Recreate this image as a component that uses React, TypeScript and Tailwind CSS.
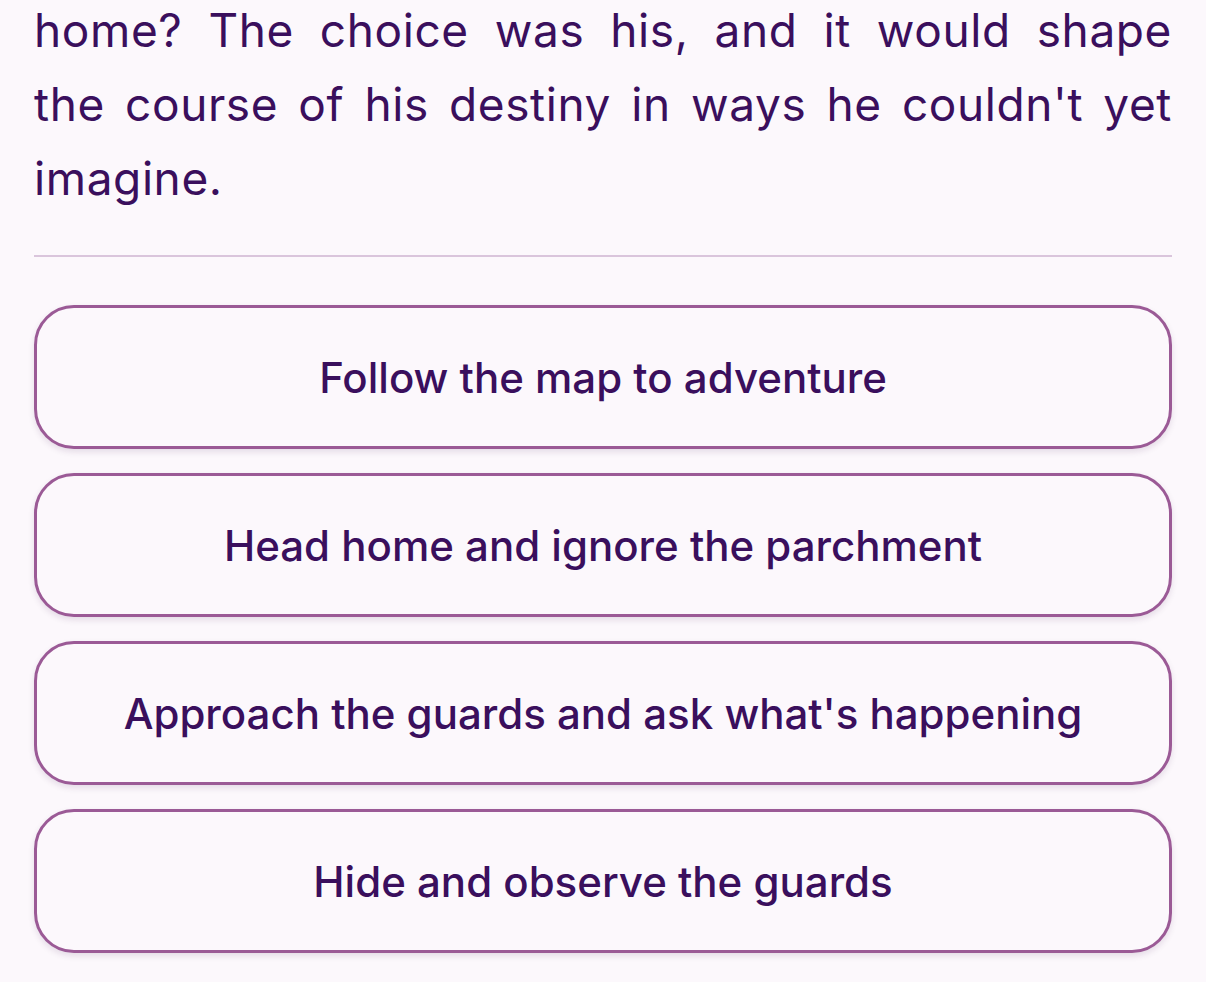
const choices = [
  "Follow the map to adventure",
  "Head home and ignore the parchment",
  "Approach the guards and ask what's happening",
  "Hide and observe the guards",
];

// story text, split the way the reader lays it out
const storyLines = [
  "home? The choice was his, and it would shape",
  "the course of his destiny in ways he couldn't yet",
  "imagine.",
];

function ChoiceButton({ label }: { label: string }) {
  return (
    <button
      type="button"
      className="flex h-[144px] w-full items-center justify-center rounded-[40px] border-[3px] border-[#9b5a96] bg-[#fcf8fc] px-8 text-center text-[42px] font-medium text-[#3a0f5d] shadow-[0_3px_6px_rgba(60,20,70,0.12)]"
    >
      {label}
    </button>
  );
}

export default function App() {
  return (
    <div
      className="min-h-[982px] w-full overflow-hidden bg-[#fcf8fc] px-[34px]"
      style={{ fontFamily: "Inter, 'Noto Sans', sans-serif" }}
    >
      <p className="mt-[-7px] text-[46px] leading-[74px] tracking-[0.6px] text-[#3a0f5d]">
        {storyLines.map((line, i) => (
          <span
            key={i}
            className={
              i < storyLines.length - 1
                ? "block text-justify [text-align-last:justify]"
                : "block text-left"
            }
          >
            {line}
          </span>
        ))}
      </p>

      <div className="mt-[40px] h-[2px] w-full bg-[#dac5dc]" />

      <div className="mt-[48px] flex flex-col gap-[24px]">
        {choices.map((c) => (
          <ChoiceButton key={c} label={c} />
        ))}
      </div>
    </div>
  );
}
